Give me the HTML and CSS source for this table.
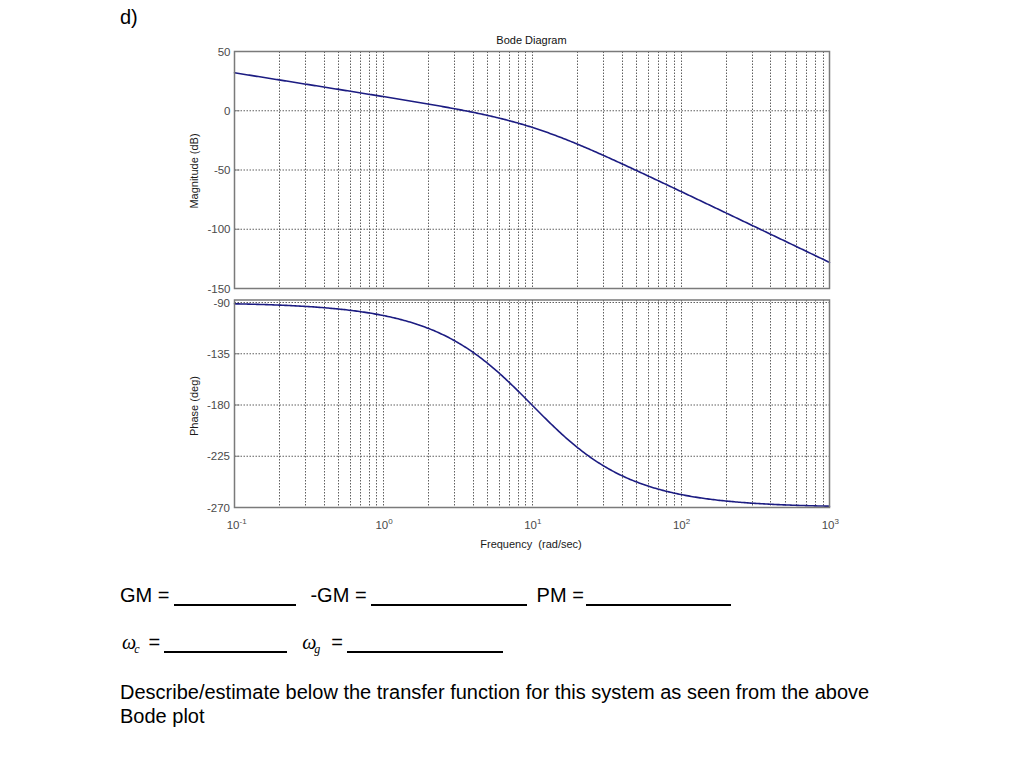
FILE: index.html
```html
<!DOCTYPE html>
<html lang="en">
<head>
<meta charset="utf-8">
<title>Bode Diagram – part d)</title>
<link rel="stylesheet" href="styles.css">
</head>
<body>
<main class="page">
  <div class="part-label">d)</div>

  <svg class="bode" viewBox="0 29 1024 532" width="1024" height="532" xmlns="http://www.w3.org/2000/svg">
    <text class="plot-title" x="531.5" y="44" text-anchor="middle">Bode Diagram</text>

    <!-- magnitude axes -->
    <g id="mag-grid"></g>
    <path class="tick" d="M234.5 110.75h5M234.5 170h5M234.5 229.25h5"/>
    <path id="mag-curve" class="curve" d=""/>
    <rect class="frame" x="234.5" y="51.5" width="595" height="237"/>
    <g class="tick-label" text-anchor="end">
      <text x="230.5" y="55.5">50</text>
      <text x="230.5" y="114.75">0</text>
      <text x="230.5" y="174">-50</text>
      <text x="230.5" y="233.25">-100</text>
      <text x="230.5" y="292.5">-150</text>
    </g>
    <text class="axis-label" x="198" y="171" text-anchor="middle" transform="rotate(-90 198 171)">Magnitude (dB)</text>

    <!-- phase axes -->
    <g id="phase-grid"></g>
    <path class="tick" d="M234.5 353.75h5M234.5 405h5M234.5 456.25h5"/>
    <path id="phase-curve" class="curve" d=""/>
    <rect class="frame" x="234.5" y="300" width="595" height="207.5"/>
    <g class="tick-label" text-anchor="end">
      <text x="230" y="306.5">-90</text>
      <text x="230" y="357.75">-135</text>
      <text x="230" y="409">-180</text>
      <text x="230" y="460.25">-225</text>
      <text x="230" y="511.5">-270</text>
    </g>
    <text class="axis-label" x="198" y="406" text-anchor="middle" transform="rotate(-90 198 406)">Phase (deg)</text>

    <!-- frequency axis -->
    <g class="tick-label">
      <text x="226.7" y="529">10<tspan class="exp" dy="-5.5">-1</tspan></text>
      <text x="375.4" y="529">10<tspan class="exp" dy="-5.5">0</tspan></text>
      <text x="524.2" y="529">10<tspan class="exp" dy="-5.5">1</tspan></text>
      <text x="672.9" y="529">10<tspan class="exp" dy="-5.5">2</tspan></text>
      <text x="821.7" y="529">10<tspan class="exp" dy="-5.5">3</tspan></text>
    </g>
    <text class="axis-label" x="531" y="548" text-anchor="middle" xml:space="preserve">Frequency  (rad/sec)</text>
  </svg>

  <section class="answers">
    <div class="row row-gm"><span class="lbl">GM =</span><span class="blank b1"></span><span class="lbl l2">-GM =</span><span class="blank b2"></span><span class="lbl l3">PM =</span><span class="blank b3"></span></div>
    <div class="row row-omega"><span class="omega o1">ω<sub>c</sub></span><span class="eq e1">=</span><span class="blank b4"></span><span class="omega o2">ω<sub>g</sub></span><span class="eq e2">=</span><span class="blank b5"></span></div>
    <p class="task">Describe/estimate below the transfer function for this system as seen from the above<br>Bode plot</p>
  </section>
</main>
<script src="script.js"></script>
</body>
</html>
```

FILE: styles.css
```css
html, body {
  margin: 0;
  padding: 0;
  background: #ffffff;
}

body {
  width: 1024px;
  height: 782px;
  overflow: hidden;
  font-family: "Liberation Sans", Arial, sans-serif;
  color: #000;
}

.part-label {
  font-size: 20px;
  line-height: 24px;
  padding: 5px 0 0 120px;
}

.bode {
  display: block;
  width: 1024px;
  height: 532px;
}

.plot-title {
  font-family: "Liberation Sans", Arial, sans-serif;
  font-size: 11px;
  fill: #111;
}

.axis-label {
  font-family: "Liberation Sans", Arial, sans-serif;
  font-size: 11px;
  fill: #1a1a1a;
}

.tick-label {
  font-family: "Liberation Sans", Arial, sans-serif;
  font-size: 11.5px;
  fill: #4a4a4a;
}

.tick-label .exp {
  font-size: 8px;
}

.grid-line {
  fill: none;
  stroke: #5f5f5f;
  stroke-width: 1;
  stroke-dasharray: 1.5 1.5;
}

.tick {
  fill: none;
  stroke: #7d7d7d;
  stroke-width: 1;
}

.frame {
  fill: none;
  stroke: #7a7a7a;
  stroke-width: 1.5;
}

.curve {
  fill: none;
  stroke: #1c1c82;
  stroke-width: 1.6;
  stroke-linejoin: round;
  stroke-linecap: round;
}

.answers {
  padding-left: 120px;
  font-size: 20px;
}

.row {
  line-height: 24px;
  height: 24px;
  white-space: nowrap;
}

.row-gm { margin-top: 22px; }
.row-omega { margin-top: 23px; }

.blank {
  display: inline-block;
  height: 0;
  border-bottom: 2px solid #000;
  vertical-align: -4px;
}

.b1 { width: 122px; margin-left: 5px; }
.b2 { width: 156px; margin-left: 4px; }
.b3 { width: 145px; margin-left: 2px; }
.b4 { width: 123px; margin-left: 4px; }
.b5 { width: 156px; margin-left: 4px; }

.l2 { margin-left: 14px; }
.l3 { margin-left: 10px; }

.omega {
  font-family: "Liberation Serif", "Times New Roman", serif;
  font-style: italic;
  font-size: 20px;
}

.omega sub {
  font-size: 12px;
  line-height: 0;
  vertical-align: -4px;
  margin-left: -2px;
}

.o1 { margin-left: 2px; }
.o2 { margin-left: 15px; }

.e1 { margin-left: 9px; }
.e2 { margin-left: 11px; }

.task {
  margin: 26px 0 0;
  line-height: 24px;
}
```

FILE: script.js
```js
(function () {
  var NS = 'http://www.w3.org/2000/svg';
  var X0 = 234.5, X1 = 829.5, DEC = (X1 - X0) / 4;

  function xOf(w) { return X0 + DEC * (Math.log10(w) + 1); }
  function yMag(db) { return 110.75 - 1.185 * db; }
  function yPh(p) { return 302.5 + (-90 - p) * 205 / 180; }

  var axes = [
    { id: 'mag-grid', top: 51.5, bottom: 288.5, ys: [110.75, 170, 229.25] },
    { id: 'phase-grid', top: 300, bottom: 507.5, ys: [302.5, 353.75, 405, 456.25] }
  ];

  axes.forEach(function (a) {
    var d = '';
    for (var dec = -1; dec < 3; dec++) {
      for (var k = 2; k <= 10; k++) {
        if (dec === 2 && k === 10) continue;
        var x = Math.round(xOf(k * Math.pow(10, dec))) + 0.5;
        d += 'M' + x + ' ' + a.top + 'V' + a.bottom;
      }
    }
    a.ys.forEach(function (y) { d += 'M' + X0 + ' ' + y + 'H' + X1; });
    var p = document.createElementNS(NS, 'path');
    p.setAttribute('d', d);
    p.setAttribute('class', 'grid-line');
    document.getElementById(a.id).appendChild(p);
  });

  // G(s) = 400 / ( s (s + 10)^2 )
  var dm = '', dp = '';
  for (var i = 0; i <= 400; i++) {
    var w = Math.pow(10, -1 + 4 * i / 400);
    var r = w / 10;
    var db = 20 * Math.log10(4) - 20 * Math.log10(w) - 20 * Math.log10(1 + r * r);
    var ph = -90 - 2 * Math.atan(r) * 180 / Math.PI;
    var x = xOf(w).toFixed(2);
    dm += (i ? 'L' : 'M') + x + ' ' + yMag(db).toFixed(2);
    dp += (i ? 'L' : 'M') + x + ' ' + yPh(ph).toFixed(2);
  }
  document.getElementById('mag-curve').setAttribute('d', dm);
  document.getElementById('phase-curve').setAttribute('d', dp);
})();
```
